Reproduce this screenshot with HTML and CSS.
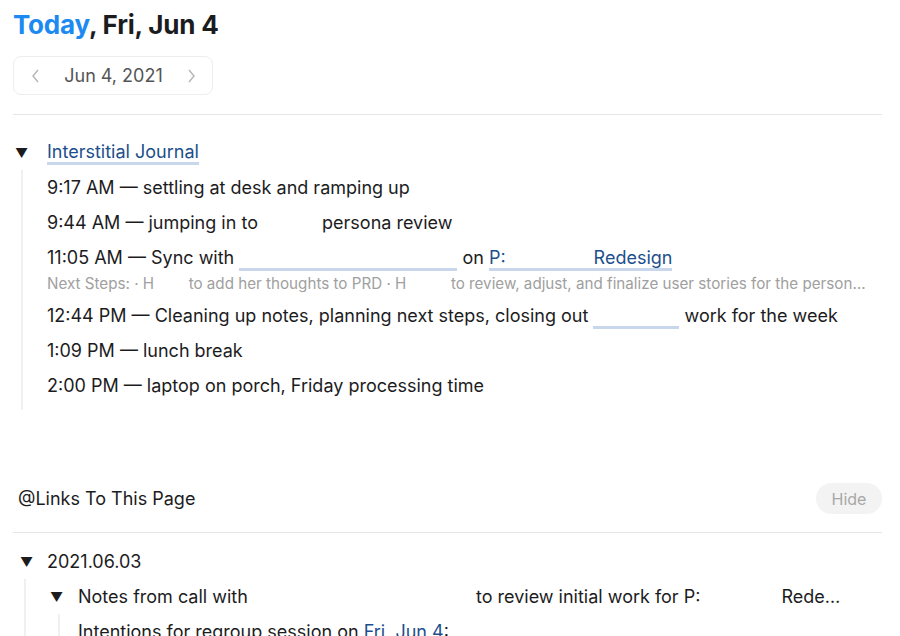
FILE: index.html
```html
<!DOCTYPE html>
<html lang="en">
<head>
    <meta charset="UTF-8">
    <title>Fri, Jun 4</title>
    <link rel="stylesheet" href="styles.css">
</head>
<body>
    <div class="page">
        <h1><span class="today">Today</span>, Fri, Jun 4</h1>
        <div class="date-picker">
            <svg class="chev" width="10" height="16" viewBox="0 0 10 16"><polyline points="7,2 2,8 7,14" fill="none" stroke="#b5b5b5" stroke-width="1.4"/></svg>
            <span class="date-label">Jun 4, 2021</span>
            <svg class="chev" width="10" height="16" viewBox="0 0 10 16"><polyline points="3,2 8,8 3,14" fill="none" stroke="#b5b5b5" stroke-width="1.4"/></svg>
        </div>
        <hr>

        <div class="tree">
            <div class="row">
                <span class="toggle">&#9660;</span>
                <a class="link">Interstitial Journal</a>
            </div>
            <div class="children">
                <div class="line">9:17 AM — settling at desk and ramping up</div>
                <div class="line">9:44 AM — jumping in to <span class="blank" style="width:54px"></span> persona review</div>
                <div class="line">11:05 AM — Sync with <a class="link blank-link" style="width:218px"></a> on <a class="link">P:<span class="blank" style="width:88px"></span>Redesign</a></div>
                <div class="sub">Next Steps: · H <span class="blank" style="width:26px"></span> to add her thoughts to PRD · H <span class="blank" style="width:36px"></span> to review, adjust, and finalize user stories for the person…</div>
                <div class="line">12:44 PM — Cleaning up notes, planning next steps, closing out <a class="link blank-link" style="width:86px"></a> work for the week</div>
                <div class="line">1:09 PM — lunch break</div>
                <div class="line">2:00 PM — laptop on porch, Friday processing time</div>
            </div>
        </div>

        <div class="refs-head">
            <span>@Links To This Page</span>
            <button class="hide-btn">Hide</button>
        </div>
        <hr class="refs-rule">

        <div class="tree refs">
            <div class="row">
                <span class="toggle">&#9660;</span>
                <span>2021.06.03</span>
            </div>
            <div class="children">
                <div class="row nested">
                    <span class="toggle">&#9660;</span>
                    <span>Notes from call with <span class="blank" style="width:218px"></span> to review initial work for P: <span class="blank" style="width:71px"></span> Rede…</span>
                </div>
                <div class="children">
                    <div class="line">Intentions for regroup session on <a class="link">Fri, Jun 4</a>:</div>
                </div>
            </div>
        </div>
    </div>
</body>
</html>
```

FILE: styles.css
```css
body {
    margin: 0;
    font-family: 'Inter', 'Liberation Sans', sans-serif;
    color: #1c1c1e;
    background: #fff;
}
.page {
    padding: 8px 18px 0 13px;
    height: 636px;
    overflow: hidden;
    box-sizing: border-box;
}
h1 {
    font-size: 26px;
    line-height: 34px;
    font-weight: 700;
    margin: 0;
    letter-spacing: -0.2px;
}
.today {
    color: #1c8af0;
}
.date-picker {
    margin-top: 14px;
    width: 200px;
    height: 39px;
    box-sizing: border-box;
    border: 1px solid #ededed;
    border-radius: 8px;
    display: flex;
    align-items: center;
    justify-content: space-between;
    padding: 0 16px 0 17px;
}
.date-label {
    font-size: 18px;
    color: #555;
}
hr {
    border: none;
    border-top: 1px solid #e6e6e6;
    margin: 19px 0 0;
}
.tree {
    margin-top: 21px;
    font-size: 18px;
}
.row {
    display: flex;
    align-items: center;
    height: 34px;
}
.toggle {
    width: 34px;
    font-size: 13px;
    padding-left: 2px;
    box-sizing: border-box;
}
.link {
    color: #1d4f8c;
    border-bottom: 3px solid #c8d7ec;
    line-height: 20px;
    text-decoration: none;
}
.children {
    margin-left: 8px;
    border-left: 2px solid #f0f0f0;
    padding: 0 0 7px 24px;
}
.line {
    line-height: 35px;
    white-space: nowrap;
}
.sub {
    font-size: 15.2px;
    line-height: 17px;
    color: #a0a0a0;
    white-space: nowrap;
    margin: 0 0 6px;
}
.blank {
    display: inline-block;
}
.blank-link {
    display: inline-block;
    height: 17px;
    vertical-align: -7px;
}
.refs-head {
    margin-top: 73px;
    display: flex;
    justify-content: space-between;
    align-items: center;
    font-size: 18px;
    padding-left: 5px;
}
.hide-btn {
    font-family: inherit;
    font-size: 16px;
    color: #a8a8a8;
    background: #f3f3f3;
    border: none;
    border-radius: 16px;
    height: 31px;
    width: 66px;
}
.refs-rule {
    margin-top: 18px;
}
.refs {
    margin-top: 11px;
}
.refs .row {
    height: 35px;
}
.refs > .row .toggle {
    padding-left: 7px;
}
.refs > .children {
    margin-left: 11px;
    padding: 0 0 0 24px;
}
.refs .nested .toggle {
    width: 28px;
    padding-left: 0;
}
.refs .children .children {
    margin-left: 8px;
    padding: 0 0 0 18px;
}
```
